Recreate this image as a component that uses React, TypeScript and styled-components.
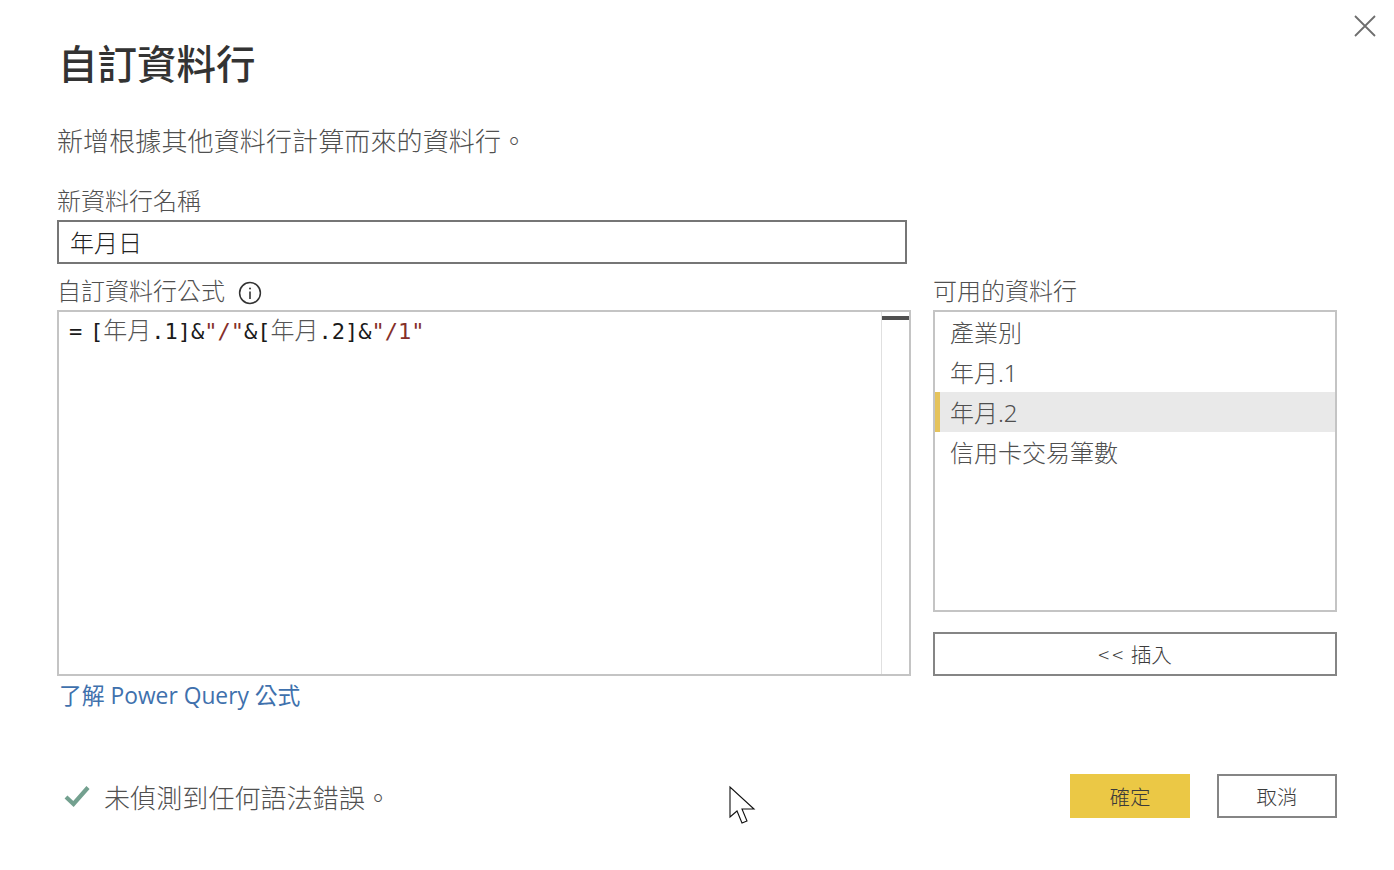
import React from 'react';
import styled, {createGlobalStyle} from "styled-components";

const GlobalStyle = createGlobalStyle`
  html, body {
    margin: 0;
    padding: 0;
    background: #FFFFFF;
  }
  body {
    font-family: "Open Sans", "Noto Sans CJK TC", sans-serif;
    color: #4A4A4A;
  }
`;

const Dialog = styled.div`
  position: relative;
  box-sizing: border-box;
  width: 1394px;
  height: 870px;
  padding: 37px 57px 0 57px;
  background: #FFFFFF;
  overflow: hidden;
`;

const CloseButton = styled.button`
  position: absolute;
  top: 14px;
  right: 17px;
  width: 24px;
  height: 24px;
  padding: 0;
  border: 0;
  background: none;
  color: #6E6E6E;
`;

const Title = styled.h1`
  margin: 0;
  padding-left: 1px;
  height: 50px;
  font-size: 39.5px;
  line-height: 50px;
  font-weight: 500;
  color: #333333;
  font-family: "Noto Sans CJK TC", sans-serif;
`;

const Description = styled.p`
  margin: 35px 0 0 0;
  height: 38px;
  font-size: 26px;
  line-height: 36px;
  font-weight: 300;
  letter-spacing: 0.12px;
  color: #505050;
  font-family: "Noto Sans CJK TC", sans-serif;
`;

const Label = styled.label`
  display: block;
  height: 38px;
  font-size: 24px;
  line-height: 36px;
  font-weight: 300;
  color: #505050;
  font-family: "Noto Sans CJK TC", sans-serif;
`;

const NameLabel = styled(Label)`
  margin-top: 22px;
`;

const NameInput = styled.div`
  box-sizing: border-box;
  width: 850px;
  height: 44px;
  padding-left: 11px;
  border: 2px solid #767676;
  font-size: 24px;
  line-height: 40px;
  font-weight: 300;
  color: #222222;
  font-family: "Noto Sans CJK TC", sans-serif;
`;

const Columns = styled.div`
  display: grid;
  grid-template-columns: 854px 404px;
  column-gap: 22px;
  margin-top: 8px;
`;

const Column = styled.div`
  display: flex;
  flex-direction: column;
`;

const LabelRow = styled.div`
  display: flex;
  align-items: flex-start;
  gap: 13px;
  height: 38px;
`;

const InfoIcon = styled.svg`
  width: 24px;
  height: 24px;
  margin-top: 9px;
  color: #333333;
`;

const FormulaBox = styled.div`
  box-sizing: border-box;
  display: flex;
  height: 366px;
  border: 2px solid #C4C4C4;
`;

const Code = styled.div`
  flex: 1;
  padding: 0 0 0 10px;
  font-family: "DejaVu Sans Mono", monospace;
  font-size: 22px;
  line-height: 34px;
  word-spacing: -5.5px;
  color: #1A1A1A;
  white-space: pre;
`;

const Cjk = styled.span`
  font-family: "Noto Sans CJK TC", sans-serif;
  font-size: 24px;
  font-weight: 300;
  color: #555555;
`;

const Str = styled.span`
  color: #85302A;
`;

const ScrollTrack = styled.div`
  box-sizing: border-box;
  width: 28px;
  padding-top: 4px;
  border-left: 1px solid #E0E0E0;
`;

const ScrollThumb = styled.div`
  height: 4px;
  background: #505050;
`;

const ColumnList = styled.ul`
  box-sizing: border-box;
  height: 302px;
  margin: 0;
  padding: 0;
  list-style: none;
  border: 2px solid #C4C4C4;
`;

const ColumnItem = styled.li<{$selected?: boolean}>`
  box-sizing: border-box;
  height: 40px;
  padding-left: ${p => p.$selected ? 10 : 15}px;
  border-left: ${p => p.$selected ? "5px solid #E5C35C" : "0"};
  background: ${p => p.$selected ? "#E9E9E9" : "transparent"};
  font-size: 24px;
  line-height: 42px;
  font-weight: 300;
  color: #4F4F4F;
  font-family: "Noto Sans", "Noto Sans CJK TC", sans-serif;
`;

const OutlineButton = styled.button<{$width: string}>`
  box-sizing: border-box;
  width: ${p => p.$width};
  height: 44px;
  padding: 0;
  border: 2px solid #858585;
  background: #FFFFFF;
  font-family: "Noto Sans CJK TC", sans-serif;
  font-size: 20.5px;
  font-weight: 300;
  color: #3C3C3C;
`;

const InsertButton = styled(OutlineButton)`
  margin-top: 20px;
`;

const Chevrons = styled.span`
  letter-spacing: 3px;
`;

const PrimaryButton = styled(OutlineButton)`
  border: 0;
  background: #EBC845;
  color: #3A3A3A;
`;

const HelpLink = styled.a`
  display: block;
  height: 40px;
  padding-left: 2px;
  font-size: 22.8px;
  line-height: 40px;
  color: #3F71AD;
  font-family: "Open Sans", "Noto Sans CJK TC", sans-serif;
`;

const Footer = styled.div`
  display: flex;
  align-items: center;
  justify-content: space-between;
  margin-top: 58px;
  height: 44px;
`;

const Status = styled.div`
  display: flex;
  align-items: center;
  gap: 14px;
  padding-left: 7px;
  font-size: 26px;
  font-weight: 300;
  letter-spacing: 0.1px;
  color: #505050;
  font-family: "Noto Sans CJK TC", sans-serif;
`;

const CheckIcon = styled.svg`
  width: 26px;
  height: 22px;
  color: #73A08F;
`;

const Buttons = styled.div`
  display: flex;
  gap: 27px;
`;

const Pointer = styled.svg`
  position: absolute;
  left: 728px;
  top: 785px;
  width: 28px;
  height: 40px;
`;

export default function App() {
    return <Dialog>
        <GlobalStyle/>
        <CloseButton aria-label="關閉">
            <svg viewBox="0 0 24 24" width="24" height="24" fill="none" stroke="currentColor" strokeWidth="1.8">
                <path d="M2 2L22 22M22 2L2 22"/>
            </svg>
        </CloseButton>
        <Title>自訂資料行</Title>
        <Description>新增根據其他資料行計算而來的資料行。</Description>
        <NameLabel>新資料行名稱</NameLabel>
        <NameInput>年月日</NameInput>
        <Columns>
            <Column>
                <LabelRow>
                    <Label>自訂資料行公式</Label>
                    <InfoIcon viewBox="0 0 24 24" fill="none" stroke="currentColor">
                        <circle cx="12" cy="12" r="10.4" strokeWidth="1.5"/>
                        <path d="M12 10.5V18" strokeWidth="1.6"/>
                        <circle cx="12" cy="7.4" r="1" fill="currentColor" stroke="none"/>
                    </InfoIcon>
                </LabelRow>
                <FormulaBox>
                    <Code>= [<Cjk>年月</Cjk>.1]&amp;<Str>"/"</Str>&amp;[<Cjk>年月</Cjk>.2]&amp;<Str>"/1"</Str></Code>
                    <ScrollTrack><ScrollThumb/></ScrollTrack>
                </FormulaBox>
                <HelpLink>了解 Power Query 公式</HelpLink>
            </Column>
            <Column>
                <Label>可用的資料行</Label>
                <ColumnList>
                    <ColumnItem>產業別</ColumnItem>
                    <ColumnItem>年月.1</ColumnItem>
                    <ColumnItem $selected>年月.2</ColumnItem>
                    <ColumnItem>信用卡交易筆數</ColumnItem>
                </ColumnList>
                <InsertButton $width="404px"><Chevrons>&lt;&lt;</Chevrons> 插入</InsertButton>
            </Column>
        </Columns>
        <Footer>
            <Status>
                <CheckIcon viewBox="0 0 26 22" fill="none" stroke="currentColor" strokeWidth="4.2">
                    <path d="M2 12L9.5 19L24 2.5"/>
                </CheckIcon>
                未偵測到任何語法錯誤。
            </Status>
            <Buttons>
                <PrimaryButton $width="120px">確定</PrimaryButton>
                <OutlineButton $width="120px">取消</OutlineButton>
            </Buttons>
        </Footer>
        <Pointer viewBox="0 0 28 40" fill="#FFFFFF" stroke="#111111" strokeWidth="1.1">
            <path d="M2 2V32L9 26L14 38L19 36L14 24H26Z"/>
        </Pointer>
    </Dialog>;
}
